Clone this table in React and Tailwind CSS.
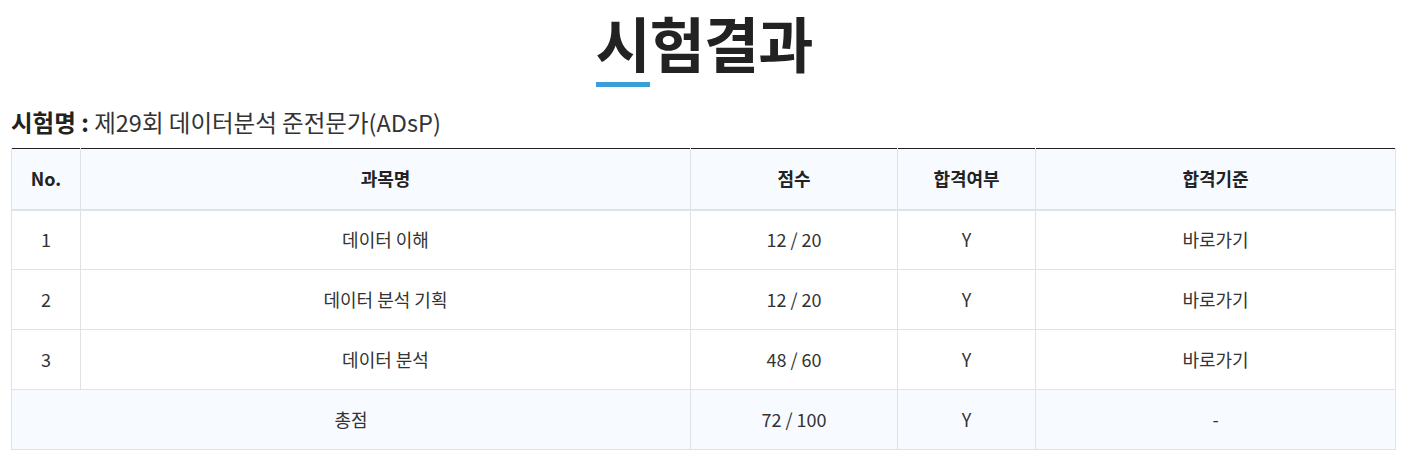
import React from 'react';

const rows = [
  { no: 1, name: '데이터 이해', score: '12 / 20', pass: 'Y' },
  { no: 2, name: '데이터 분석 기획', score: '12 / 20', pass: 'Y' },
  { no: 3, name: '데이터 분석', score: '48 / 60', pass: 'Y' },
];

const font = { fontFamily: '"Noto Sans CJK KR", "Noto Sans", sans-serif' };

export default function App() {
  return (
    <div className="bg-white w-[1408px] h-[463px] text-[#333]" style={font}>
      {/* Title */}
      <div className="flex justify-center">
        <h1 className="text-[60px] leading-[84px] font-bold text-[#222] tracking-[-1px]">
          <span className="inline-block border-b-[5px] border-[#3a9ed8] leading-[81px]">시</span>험결과
        </h1>
      </div>

      {/* Exam name */}
      <div className="ml-[11px] mt-[19px] text-[23.5px] leading-[32px] text-[#333]">
        <strong className="font-bold text-[#222]">시험명 : </strong>제29회 데이터분석 준전문가(ADsP)
      </div>

      {/* Result table */}
      <table className="ml-[11px] mt-[10px] w-[1384px] table-fixed border-collapse text-[18px] text-[#333]">
        <colgroup>
          <col className="w-[69px]" />
          <col className="w-[610px]" />
          <col className="w-[207px]" />
          <col className="w-[138px]" />
          <col className="w-[360px]" />
        </colgroup>
        <thead>
          <tr className="h-[61px] bg-[#f7faff] border-t border-[#222] border-b-2 border-b-[#dfe3e8] text-[#222]">
            <th className="font-bold border-l border-r border-[#dfe3e8]">No.</th>
            <th className="font-bold border-r border-[#dfe3e8]">과목명</th>
            <th className="font-bold border-r border-[#dfe3e8]">점수</th>
            <th className="font-bold border-r border-[#dfe3e8]">합격여부</th>
            <th className="font-bold border-r border-[#dfe3e8]">합격기준</th>
          </tr>
        </thead>
        <tbody>
          {rows.map((r) => (
            <tr key={r.no} className="h-[60px] border-b border-[#dfe3e8] text-center">
              <td className="border-l border-r border-[#dfe3e8]">{r.no}</td>
              <td className="border-r border-[#dfe3e8]">{r.name}</td>
              <td className="border-r border-[#dfe3e8]">{r.score}</td>
              <td className="border-r border-[#dfe3e8]">{r.pass}</td>
              <td className="border-r border-[#dfe3e8]">바로가기</td>
            </tr>
          ))}
          <tr className="h-[60px] bg-[#f7faff] border-b border-[#dfe3e8] text-center">
            <td colSpan={2} className="border-l border-r border-[#dfe3e8]">총점</td>
            <td className="border-r border-[#dfe3e8]">72 / 100</td>
            <td className="border-r border-[#dfe3e8]">Y</td>
            <td className="border-r border-[#dfe3e8]">-</td>
          </tr>
        </tbody>
      </table>
    </div>
  );
}
